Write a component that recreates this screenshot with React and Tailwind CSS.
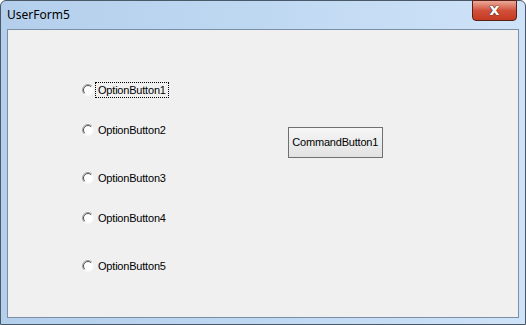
import React from "react";

function Radio() {
  return (
    <svg width="12" height="12" viewBox="0 0 12 12" className="shrink-0">
      <circle cx="6" cy="6" r="5.5" fill="#ffffff" />
      <path d="M9.9 2.1 A5.5 5.5 0 0 0 2.1 9.9" fill="none" stroke="#a0a0a0" strokeWidth="1" />
      <path d="M9.2 2.8 A4.5 4.5 0 0 0 2.8 9.2" fill="none" stroke="#505050" strokeWidth="1" />
      <path d="M2.1 9.9 A5.5 5.5 0 0 0 9.9 2.1" fill="none" stroke="#f4f4f4" strokeWidth="1" />
    </svg>
  );
}

function Option({ label, focused }) {
  return (
    <div className="flex items-center h-[16px]">
      <Radio />
      <span
        className={
          "ml-[1px] px-[2px] leading-[14px] text-[11px] text-black tracking-[-0.2px] " +
          (focused ? "border border-dotted border-black" : "border border-transparent")
        }
      >
        {label}
      </span>
    </div>
  );
}

export default function App() {
  return (
    <div
      className="w-[526px] h-[325px] bg-white"
      style={{ fontFamily: "'Liberation Sans', Arial, sans-serif" }}
    >
      <div className="relative w-[526px] h-[325px] rounded-t-[6px] border border-[#4a5868] bg-gradient-to-r from-[#b4cfec] via-[#bfd8f2] to-[#cfe3f8] flex flex-col">
        {/* title bar */}
        <div className="h-[28px] flex items-center pl-[6px] shrink-0">
          <span className="text-[12px] text-black" style={{ fontFamily: "'Noto Sans', 'Open Sans', sans-serif" }}>
            UserForm5
          </span>
        </div>
        {/* close button */}
        <div className="absolute top-[-1px] right-[8px] w-[45px] h-[21px] rounded-b-[4px] border border-[#5a2016] bg-gradient-to-b from-[#e9a99a] via-[#d1503a] to-[#c33a20] flex items-center justify-center">
          <span
            className="text-white text-[16px] font-bold leading-none -mt-[2px]"
            style={{ fontFamily: "'DejaVu Sans', sans-serif", textShadow: "0 0 1px #3a0a00, 0 0 1px #3a0a00" }}
          >
            x
          </span>
        </div>
        {/* client area */}
        <div className="mx-[6px] mb-[6px] flex-1 border border-[#7a8ea6] bg-[#f0f0f0] flex">
          <div className="flex flex-col pl-[74px] pt-[52px]">
            <Option label="OptionButton1" focused />
            <div className="h-[24px]" />
            <Option label="OptionButton2" />
            <div className="h-[32px]" />
            <Option label="OptionButton3" />
            <div className="h-[24px]" />
            <Option label="OptionButton4" />
            <div className="h-[32px]" />
            <Option label="OptionButton5" />
          </div>
          <div className="ml-[119px] mt-[97px]">
            <div className="w-[95px] h-[31px] border border-[#707070] bg-gradient-to-b from-[#f6f6f6] to-[#e2e2e2] flex items-center justify-center text-[11px] text-black tracking-[-0.2px]">
              CommandButton1
            </div>
          </div>
        </div>
      </div>
    </div>
  );
}
